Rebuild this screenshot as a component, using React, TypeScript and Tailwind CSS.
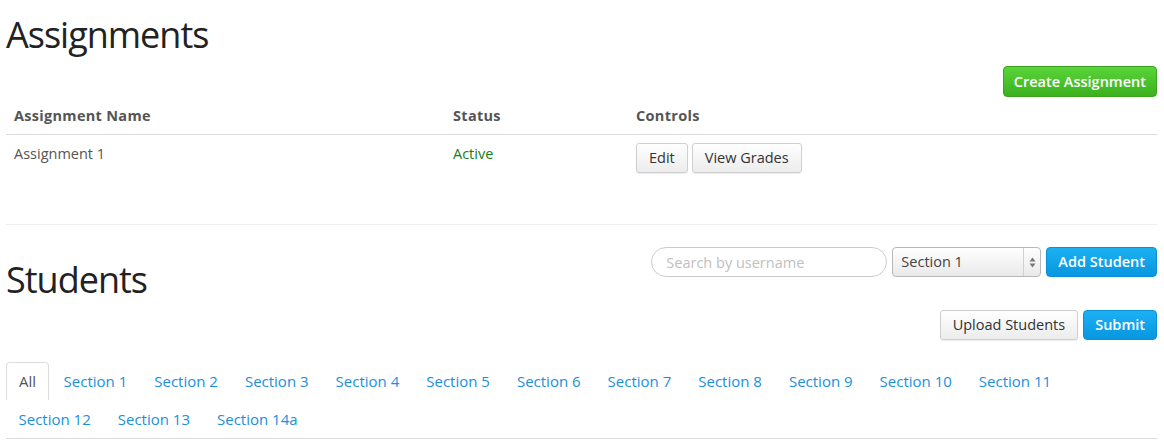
import React from "react";

const sections = [
  "Section 1", "Section 2", "Section 3", "Section 4", "Section 5", "Section 6", "Section 7",
  "Section 8", "Section 9", "Section 10", "Section 11", "Section 12", "Section 13", "Section 14a",
];

const GreyButton = ({ children }: { children: React.ReactNode }) => (
  <button className="h-[30px] px-[12px] rounded-[3px] border border-[#cfcfcf] bg-gradient-to-b from-white to-[#ececec] text-[14.5px] text-[#333] shadow-[0_1px_1px_rgba(0,0,0,0.08)]">
    {children}
  </button>
);

const BlueButton = ({ children }: { children: React.ReactNode }) => (
  <button className="h-[30px] px-[11px] rounded-[4px] border border-[#0b8fd6] bg-gradient-to-b from-[#1cb0f2] to-[#0796e0] text-[14.5px] font-semibold text-white">
    {children}
  </button>
);

const App = () => {
  return (
    <div className="min-h-[448px] bg-white px-[6px] font-['Open_Sans',sans-serif] text-[14.5px] text-[#555]">
      <h1 className="pt-[14px] text-[36px] leading-[42px] tracking-[-1px] text-[#222]">Assignments</h1>

      <div className="flex justify-end pt-[10px] pr-[1px]">
        <button className="h-[31px] px-[10px] rounded-[4px] border border-[#3aa51c] bg-gradient-to-b from-[#5ad43a] to-[#3bb21d] text-[14.5px] font-semibold text-white">
          Create Assignment
        </button>
      </div>

      <table className="w-[1151px] border-collapse">
        <thead>
          <tr className="border-b border-[#dddddd]">
            <th className="w-[439px] px-[8px] py-[8px] text-left font-bold leading-[21px] tracking-[0.3px] text-[#555]">Assignment Name</th>
            <th className="w-[183px] px-[8px] py-[8px] text-left font-bold leading-[21px] tracking-[0.3px] text-[#555]">Status</th>
            <th className="px-[8px] py-[8px] text-left font-bold leading-[21px] tracking-[0.3px] text-[#555]">Controls</th>
          </tr>
        </thead>
        <tbody>
          <tr>
            <td className="px-[8px] pt-[8px] pb-[8px] align-top leading-[21px]">Assignment 1</td>
            <td className="px-[8px] pt-[8px] pb-[8px] align-top leading-[21px] text-[#178017]">Active</td>
            <td className="px-[8px] pt-[8px] pb-[8px] align-top">
              <div className="flex gap-[4px]">
                <GreyButton>Edit</GreyButton>
                <GreyButton>View Grades</GreyButton>
              </div>
            </td>
          </tr>
        </tbody>
      </table>

      <div className="mt-[43px] w-[1151px] border-t border-[#eeeeee]" />

      <div className="flex w-[1151px] justify-between">
        <h1 className="mt-[34px] text-[36px] leading-[42px] tracking-[-1px] text-[#222]">Students</h1>
        <div className="mt-[22px] flex flex-col items-end gap-[33px]">
          <div className="flex gap-[5px]">
            <input
              placeholder="Search by username"
              className="h-[30px] w-[236px] rounded-full border border-[#cccccc] px-[14px] text-[14.5px] text-[#555] placeholder:text-[#c0c0c0] outline-none"
            />
            <div className="flex h-[30px] w-[149px] items-center rounded-[4px] border border-[#b8b8b8] bg-gradient-to-b from-white to-[#e9e9e9] text-[14.5px] text-[#444]">
              <span className="flex-1 pl-[8px]">Section 1</span>
              <span className="flex h-full w-[17px] items-center justify-center border-l border-[#d0d0d0]">
                <svg width="7" height="11" viewBox="0 0 7 11">
                  <path d="M3.5 0.5 L6.5 4.5 L0.5 4.5 Z" fill="#777" />
                  <path d="M3.5 10.5 L6.5 6.5 L0.5 6.5 Z" fill="#777" />
                </svg>
              </span>
            </div>
            <BlueButton>Add Student</BlueButton>
          </div>
          <div className="flex gap-[5px]">
            <GreyButton>Upload Students</GreyButton>
            <BlueButton>Submit</BlueButton>
          </div>
        </div>
      </div>

      <ul className="mt-[22px] flex w-[1151px] flex-wrap border-b border-[#dddddd] text-[15px]">
        <li className="mr-[2px]">
          <a className="block rounded-t-[4px] border border-b-0 border-[#dddddd] px-[12px] pt-[8px] pb-[9px] leading-[20px] text-[#555]">All</a>
        </li>
        {sections.map((s) => (
          <li key={s} className="mr-[2px]">
            <a className="block border border-transparent px-[11.5px] pt-[8px] pb-[8px] leading-[20px] text-[#1b8fdb]">{s}</a>
          </li>
        ))}
      </ul>
    </div>
  );
};

export default App;
